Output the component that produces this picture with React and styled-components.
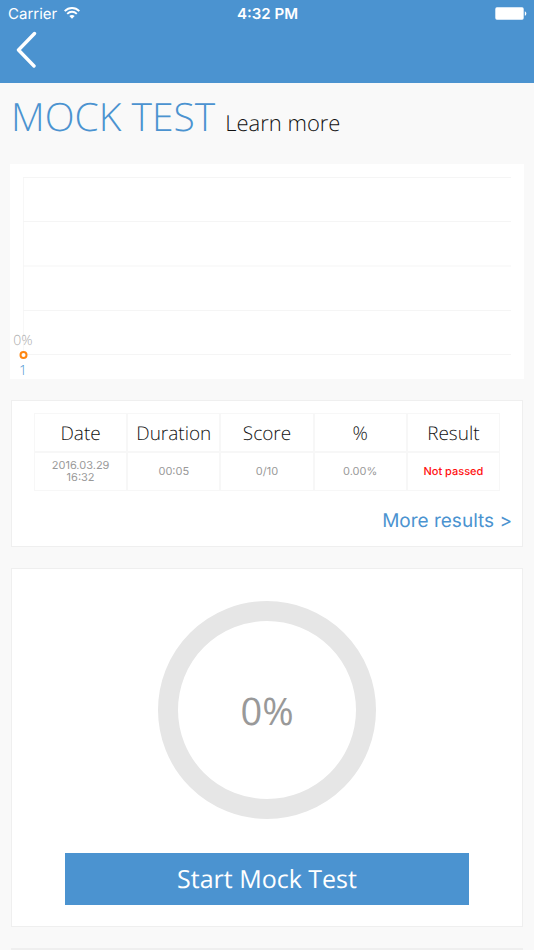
import React from "react";
import styled, { createGlobalStyle } from "styled-components";

const blue = "#4b93d0";

const GlobalStyle = createGlobalStyle`
  *, *::before, *::after { box-sizing: border-box; }
  body {
    margin: 0;
    background: #f9f9f9;
    color: #111;
    font-family: "Open Sans", "Noto Sans", sans-serif;
    text-rendering: geometricPrecision;
  }
`;

const Page = styled.div`
  min-height: 100vh;
`;

const Header = styled.header`
  background: ${blue};
  color: #fff;
  padding-bottom: 13px;
`;

const StatusBar = styled.div`
  display: grid;
  grid-template-columns: 1fr auto 1fr;
  align-items: center;
  height: 28px;
  padding: 0 7px 0 8px;
  font: 400 15px/20px Inter, sans-serif;
`;

const Carrier = styled.div`
  display: flex;
  align-items: center;
  gap: 7px;

  svg { margin-bottom: 2px; }
`;

const Clock = styled.time`
  font-weight: 600;
`;

const Battery = styled.svg`
  justify-self: end;
  display: block;
  margin-bottom: 1px;
`;

const BackButton = styled.button`
  display: block;
  margin-left: 8px;
  padding: 2px 8px;
  border: 0;
  background: none;
  color: inherit;
  cursor: pointer;

  svg { display: block; }
`;

const Main = styled.main`
  display: flex;
  flex-direction: column;
  padding: 0 11px;
`;

const TitleRow = styled.div`
  display: flex;
  align-items: baseline;
  gap: 10px;
  padding: 7px 0 20px;
`;

const Title = styled.h1`
  margin: 0;
  color: ${blue};
  font-size: 39px;
  font-weight: 300;
  line-height: 54px;
`;

const LearnMore = styled.a`
  color: #111;
  font-size: 22px;
  font-weight: 300;
  line-height: 30px;
  text-decoration: none;
`;

const ChartPanel = styled.section`
  margin: 0 -1px 21px;
  background: #fff;

  svg { display: block; width: 100%; height: auto; overflow: visible; }
`;

const ValueLabel = styled.text`
  fill: ${(p) => p.$color};
  font-size: 14px;
  font-weight: 300;
  text-anchor: middle;
`;

const Card = styled.section`
  margin-bottom: 21px;
  border: 1px solid #efefef;
  background: #fff;
`;

const ResultsCard = styled(Card)`
  display: flex;
  flex-direction: column;
  padding: 12px 10px 11px;
`;

const ResultsTable = styled.table`
  width: calc(100% - 24px);
  margin: 0 12px;
  table-layout: fixed;
  border-spacing: 0;
  text-align: center;
`;

const HeadCell = styled.th`
  height: 39px;
  padding: 0;
  border: 1px solid #f7f7f7;
  font-size: 19px;
  font-weight: 300;
  line-height: 26px;
`;

const Cell = styled.td`
  height: 39px;
  padding: 0 12px 2px;
  border: 1px solid #f7f7f7;
  color: ${(p) => (p.$failed ? "#ff1010" : "#999")};
  font: ${(p) => (p.$failed ? 500 : 400)} 11px/12px Inter, sans-serif;
  white-space: ${(p) => (p.$failed ? "nowrap" : "normal")};
`;

const MoreLink = styled.a`
  align-self: flex-end;
  margin-top: 16px;
  color: ${blue};
  font: 400 19px/28px Inter, sans-serif;
  text-decoration: none;
`;

const StartCard = styled(Card)`
  display: flex;
  flex-direction: column;
  align-items: center;
  gap: 34px;
  padding: 32px 53px 21px;
`;

const ProgressRing = styled.div`
  display: grid;
  place-items: center;
  width: 218px;
  height: 218px;
  padding-top: 2px;
  border: 20px solid #e6e6e6;
  border-radius: 50%;
  color: #999;
  font-size: 38px;
  font-weight: 400;
  line-height: 52px;
`;

const StartButton = styled.button`
  width: 100%;
  padding: 8px;
  border: 0;
  background: ${blue};
  color: #fff;
  font: 400 25px/36px "Open Sans", sans-serif;
  text-rendering: inherit;
  cursor: pointer;
`;

const columns = ["Date", "Duration", "Score", "%", "Result"];
const results = [
  { date: "2016.03.29 16:32", duration: "00:05", score: "0/10", percent: "0.00%", passed: false },
];
const gridLines = [13.5, 57.5, 102, 146.5, 190.5];

function ScoreChart() {
  return (
    <svg viewBox="0 0 514 215" role="img" aria-label="Mock test scores">
      <path d="M13.5 13V190" stroke="#f7f7f7" />
      {gridLines.map((y) => (
        <path key={y} d={`M13 ${y}H501`} stroke="#f5f5f5" />
      ))}
      <ValueLabel x="13" y="181" $color="#aaa">0%</ValueLabel>
      <circle cx="13.5" cy="191" r="3" fill="#fff" stroke="#ff8610" strokeWidth="2" />
      <ValueLabel x="13" y="211" $color={blue}>1</ValueLabel>
    </svg>
  );
}

export default function App() {
  return (
    <Page>
      <GlobalStyle />
      <Header>
        <StatusBar>
          <Carrier>
            <span>Carrier</span>
            <svg width="16" height="12" viewBox="0 0 16 12" fill="none" stroke="#fff" aria-hidden="true">
              <path d="M.7 4.1C4.8 0 11.2 0 15.3 4.1" strokeWidth="2" />
              <path d="M3.2 6.8C5.9 4.1 10.1 4.1 12.8 6.8" strokeWidth="1.9" />
              <path d="M5.3 9C6.9 7.5 9.1 7.5 10.7 9L8 11.8Z" fill="#fff" stroke="none" />
            </svg>
          </Carrier>
          <Clock>4:32 PM</Clock>
          <Battery width="32" height="13" viewBox="0 0 32 13" fill="#fff" aria-hidden="true">
            <rect x="0.3" y="0.3" width="28.4" height="12.4" rx="1.6" />
            <path d="M29.8 4.2C31.8 5 31.8 8 29.8 8.8Z" />
          </Battery>
        </StatusBar>
        <BackButton type="button" aria-label="Back">
          <svg width="22" height="38" viewBox="0 0 22 38" fill="none" stroke="#fff" strokeWidth="3.4" strokeLinecap="round" strokeLinejoin="round">
            <path d="M18.5 3.5L2.5 20L18 36" />
          </svg>
        </BackButton>
      </Header>
      <Main>
        <TitleRow>
          <Title>MOCK TEST</Title>
          <LearnMore href="#learn-more">Learn more</LearnMore>
        </TitleRow>
        <ChartPanel>
          <ScoreChart />
        </ChartPanel>
        <ResultsCard>
          <ResultsTable>
            <thead>
              <tr>
                {columns.map((name) => (
                  <HeadCell key={name} scope="col">{name}</HeadCell>
                ))}
              </tr>
            </thead>
            <tbody>
              {results.map((r) => (
                <tr key={r.date}>
                  <Cell>{r.date}</Cell>
                  <Cell>{r.duration}</Cell>
                  <Cell>{r.score}</Cell>
                  <Cell>{r.percent}</Cell>
                  <Cell $failed={!r.passed}>{r.passed ? "Passed" : "Not passed"}</Cell>
                </tr>
              ))}
            </tbody>
          </ResultsTable>
          <MoreLink href="#results">More results &gt;</MoreLink>
        </ResultsCard>
        <StartCard>
          <ProgressRing>0%</ProgressRing>
          <StartButton type="button">Start Mock Test</StartButton>
        </StartCard>
        <Card />
      </Main>
    </Page>
  );
}
